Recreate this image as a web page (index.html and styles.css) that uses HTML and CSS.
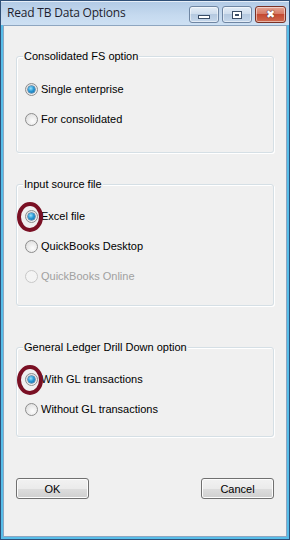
FILE: index.html
```html
<!DOCTYPE html>
<html lang="en">
<head>
    <meta charset="UTF-8">
    <title>Read TB Data Options</title>
    <link rel="stylesheet" href="styles.css">
</head>
<body>

<div class="window">
    <header class="titlebar">
        <span class="title">Read TB Data Options</span>
        <div class="caption-buttons">
            <span class="cap-btn"><span class="glyph-min"></span></span>
            <span class="cap-btn"><span class="glyph-max"></span></span>
            <span class="cap-btn close"><span class="glyph-close">&#x2716;</span></span>
        </div>
    </header>

    <main class="client">
        <section class="group group-fs">
            <span class="group-title">Consolidated FS option</span>
            <div class="options">
                <label class="option"><span class="radio checked"></span>Single enterprise</label>
                <label class="option"><span class="radio"></span>For consolidated</label>
            </div>
        </section>

        <section class="group group-source">
            <span class="group-title">Input source file</span>
            <div class="options">
                <label class="option"><span class="radio checked"></span>Excel file<span class="mark"></span></label>
                <label class="option"><span class="radio"></span>QuickBooks Desktop</label>
                <label class="option disabled"><span class="radio"></span>QuickBooks Online</label>
            </div>
        </section>

        <section class="group group-gl">
            <span class="group-title">General Ledger Drill Down option</span>
            <div class="options">
                <label class="option"><span class="radio checked"></span>With GL transactions<span class="mark"></span></label>
                <label class="option"><span class="radio"></span>Without GL transactions</label>
            </div>
        </section>

        <div class="actions">
            <button class="btn">OK</button>
            <button class="btn">Cancel</button>
        </div>
    </main>
</div>

</body>
</html>
```

FILE: styles.css
```css
* {
    margin: 0;
    padding: 0;
    box-sizing: border-box;
}

body {
    font-family: 'Liberation Sans', Arial, sans-serif;
    font-size: 11px;
    color: #000;
    background: #fff;
}

/* Window frame */
.window {
    width: 290px;
    height: 540px;
    display: flex;
    flex-direction: column;
    border: 1px solid #2f4f77;
    background: #57bde9;
    padding: 0 2px 2px;
}

.titlebar {
    height: 24px;
    margin: 0 -2px;
    padding: 0 3px 0 6px;
    display: flex;
    align-items: center;
    background: linear-gradient(#b3cbe6, #c6daef 60%, #cde0f3);
    border-top: 1px solid #e6eef8;
}

.title {
    font-family: 'Open Sans', sans-serif;
    font-size: 12px;
    color: #1e1e2e;
    letter-spacing: -0.2px;
    margin-top: -3px;
}

.caption-buttons {
    margin-left: auto;
    display: flex;
    gap: 3px;
    align-self: flex-start;
    margin-top: 4px;
}

.cap-btn {
    width: 30px;
    height: 17px;
    border: 1px solid #6f86a3;
    border-radius: 3px;
    background: linear-gradient(#e4edf7, #cfdded 45%, #b5c9e0 50%, #c5d7eb);
    display: flex;
    align-items: center;
    justify-content: center;
    box-shadow: inset 0 0 0 1px rgba(255, 255, 255, 0.5);
}

.cap-btn.close {
    width: 31px;
    border-color: #7a3125;
    background: linear-gradient(#e4a493, #d77b66 45%, #c44a32 50%, #d06a4f);
}

.glyph-min {
    width: 12px;
    height: 4px;
    margin-top: 5px;
    background: #fff;
    border: 1px solid #3a4d66;
}

.glyph-max {
    width: 10px;
    height: 8px;
    border: 1px solid #3a4d66;
    background: #fff;
    box-shadow: inset 0 0 0 2px #fff, inset 0 0 0 3px #3a4d66;
}

.glyph-close {
    color: #fff;
    font-family: 'DejaVu Sans', sans-serif;
    font-size: 11px;
    line-height: 1;
    text-shadow: 0 0 1px #4d1a12, 0 0 1px #4d1a12;
}

/* Client area */
.client {
    flex: 1;
    background: #f0f0f0;
    border: 1px solid #8ea6c0;
    padding: 30px 12px 0;
    display: flex;
    flex-direction: column;
}

.group {
    position: relative;
    border: 1px solid #d5dfe5;
    border-radius: 3px;
    box-shadow: inset 1px 1px 0 #fff, 1px 1px 0 #fff;
    display: flex;
    flex-direction: column;
    padding: 0 8px;
}

.group-fs { height: 97px; }
.group-source { height: 122px; margin-top: 31px; }
.group-gl { height: 90px; margin-top: 41px; }

.group-title {
    align-self: flex-start;
    margin: -7px 0 0 -2px;
    padding: 0 1px;
    line-height: 13px;
    background: #f0f0f0;
}

.options {
    display: flex;
    flex-direction: column;
    margin-top: 11px;
}

.group-source .options { margin-top: 10px; }
.group-gl .options { margin-top: 10px; }

.option {
    position: relative;
    height: 30px;
    display: flex;
    align-items: center;
    gap: 3px;
}

.option.disabled {
    color: #a0a0a0;
}

/* Radio buttons */
.radio {
    flex: none;
    width: 13px;
    height: 13px;
    border-radius: 50%;
    border: 1px solid #8d8d8d;
    background: radial-gradient(circle at 60% 65%, #fdfdfd, #e3e3e3 70%, #d4d4d4);
    position: relative;
}

.disabled .radio {
    border-color: #c8c8c8;
    background: #f4f4f4;
}

.radio.checked::after {
    content: '';
    position: absolute;
    left: 2px;
    top: 2px;
    width: 7px;
    height: 7px;
    border-radius: 50%;
    background: radial-gradient(circle at 40% 35%, #9be2fb, #2a9ad6 45%, #0b5e9c);
    box-shadow: 0 0 0 0.5px #0e4f80;
}

/* Red highlight annotation */
.mark {
    position: absolute;
    left: -8px;
    top: 1px;
    width: 26px;
    height: 30px;
    border: 4px solid #7a1024;
    border-radius: 50%;
}

/* Dialog buttons */
.actions {
    margin-top: 41px;
    display: flex;
    justify-content: space-between;
}

.btn {
    width: 73px;
    height: 21px;
    font-family: 'Liberation Sans', Arial, sans-serif;
    font-size: 11px;
    color: #000;
    border: 1px solid #707070;
    border-radius: 3px;
    background: linear-gradient(#f2f2f2, #ebebeb 50%, #dddddd 51%, #cfcfcf);
    box-shadow: inset 0 0 0 1px #fcfcfc;
}
```
